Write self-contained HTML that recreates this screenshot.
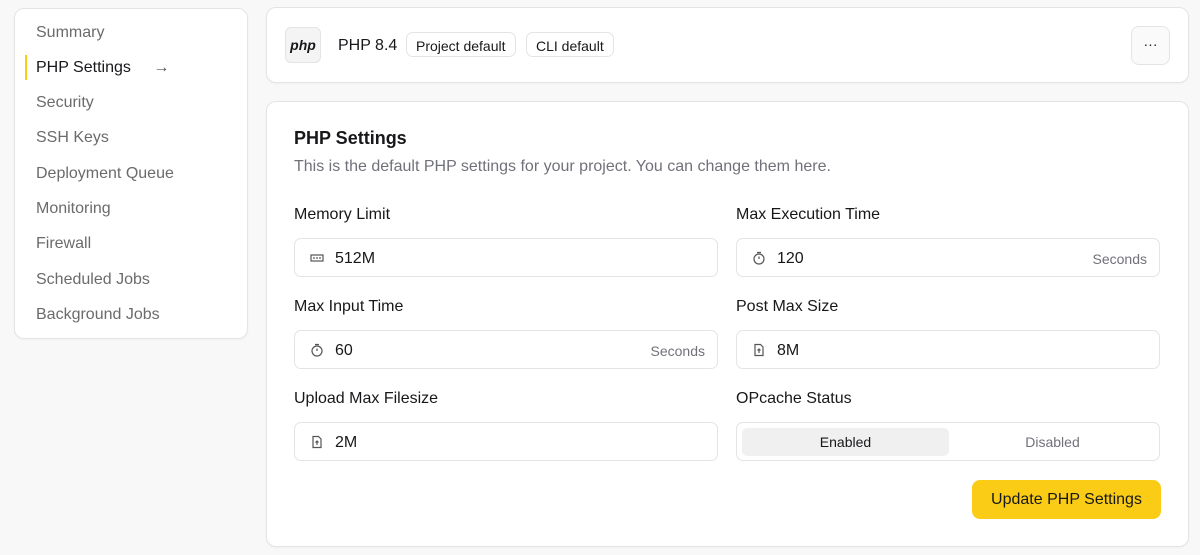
<!DOCTYPE html><html><head><style>
*{box-sizing:border-box;margin:0;padding:0}
body{width:1200px;height:555px;background:#f8f8f8;font-family:"Liberation Sans",sans-serif;position:relative;overflow:hidden;color:#18181b}
.card{position:absolute;background:#fff;border:1px solid #e4e4e7;border-radius:10px;box-shadow:0 1px 2px rgba(0,0,0,.04)}
.nav{position:absolute;left:36px;font-size:16px;color:#6b6b6b}
.lbl{position:absolute;font-size:16px;color:#18181b}
.inp{position:absolute;width:424px;height:39px;border:1px solid #e4e4e7;border-radius:7px;background:#fff}
.inp .v{position:absolute;left:40px;top:11px;font-size:16px}
.inp .s{position:absolute;right:12px;top:12px;font-size:14px;color:#71717a}
.inp svg{position:absolute;left:15px;top:12px}
.badge{position:absolute;top:32px;height:25px;border:1px solid #e4e4e7;border-radius:7px;font-size:14px;padding:5px 9px}
</style></head><body>
<div class="card" style="left:14px;top:8px;width:234px;height:331px"></div>
<div style="position:absolute;left:25px;top:55px;width:2px;height:25px;background:#facc15"></div>
<div class="nav" style="top:24px">Summary</div>
<div class="nav" style="top:59px;color:#18181b">PHP Settings <span style="margin-left:18px;color:#555">→</span></div>
<div class="nav" style="top:94px">Security</div>
<div class="nav" style="top:129px">SSH Keys</div>
<div class="nav" style="top:165px">Deployment Queue</div>
<div class="nav" style="top:200px">Monitoring</div>
<div class="nav" style="top:235px">Firewall</div>
<div class="nav" style="top:271px">Scheduled Jobs</div>
<div class="nav" style="top:306px">Background Jobs</div>

<div class="card" style="left:266px;top:7px;width:923px;height:76px"></div>
<div style="position:absolute;left:285px;top:27px;width:36px;height:36px;border:1px solid #e4e4e7;border-radius:6px;background:#f4f4f5;font-size:14px;font-weight:bold;font-style:italic;text-align:center;line-height:34px">php</div>
<div style="position:absolute;left:338px;top:37px;font-size:16px">PHP 8.4</div>
<div class="badge" style="left:406px">Project default</div>
<div class="badge" style="left:526px">CLI default</div>
<div style="position:absolute;left:1131px;top:26px;width:39px;height:39px;border:1px solid #e4e4e7;border-radius:8px;text-align:center;line-height:34px;font-size:14px;background:#fafafa">···</div>

<div class="card" style="left:266px;top:101px;width:923px;height:446px"></div>
<div style="position:absolute;left:294px;top:128px;font-size:18px;font-weight:bold">PHP Settings</div>
<div style="position:absolute;left:294px;top:158px;font-size:16px;color:#71717a">This is the default PHP settings for your project. You can change them here.</div>

<div class="lbl" style="left:294px;top:206px">Memory Limit</div>
<div class="lbl" style="left:736px;top:206px">Max Execution Time</div>
<div class="inp" style="left:294px;top:238px"><svg width="14" height="14" viewBox="0 0 14 14" fill="none" stroke="#555" stroke-width="1.2"><rect x="1" y="4" width="12" height="6"/><path d="M4 6v2M7 6v2M10 6v2"/></svg><span class="v">512M</span></div>
<div class="inp" style="left:736px;top:238px"><svg width="14" height="14" viewBox="0 0 14 14" fill="none" stroke="#555" stroke-width="1.2"><circle cx="7" cy="8" r="5"/><path d="M5 1.5h4M7 8V5.5"/></svg><span class="v">120</span><span class="s">Seconds</span></div>

<div class="lbl" style="left:294px;top:298px">Max Input Time</div>
<div class="lbl" style="left:736px;top:298px">Post Max Size</div>
<div class="inp" style="left:294px;top:330px"><svg width="14" height="14" viewBox="0 0 14 14" fill="none" stroke="#555" stroke-width="1.2"><circle cx="7" cy="8" r="5"/><path d="M5 1.5h4M7 8V5.5"/></svg><span class="v">60</span><span class="s">Seconds</span></div>
<div class="inp" style="left:736px;top:330px"><svg width="14" height="14" viewBox="0 0 14 14" fill="none" stroke="#555" stroke-width="1.2"><path d="M3 1.5h5.5l2.5 2.5v8.5H3z"/><path d="M7 10V6M5.5 7.5L7 6l1.5 1.5"/></svg><span class="v">8M</span></div>

<div class="lbl" style="left:294px;top:390px">Upload Max Filesize</div>
<div class="lbl" style="left:736px;top:390px">OPcache Status</div>
<div class="inp" style="left:294px;top:422px"><svg width="14" height="14" viewBox="0 0 14 14" fill="none" stroke="#555" stroke-width="1.2"><path d="M3 1.5h5.5l2.5 2.5v8.5H3z"/><path d="M7 10V6M5.5 7.5L7 6l1.5 1.5"/></svg><span class="v">2M</span></div>
<div class="inp" style="left:736px;top:422px"><div style="position:absolute;left:5px;top:5px;width:207px;height:28px;background:#f0f0f0;border-radius:5px;text-align:center;line-height:28px;font-size:14px">Enabled</div><div style="position:absolute;left:212px;top:5px;width:207px;height:28px;text-align:center;line-height:28px;font-size:14px;color:#71717a">Disabled</div></div>

<div style="position:absolute;left:972px;top:480px;width:189px;height:39px;background:#facc15;border-radius:8px;text-align:center;line-height:39px;font-size:16px">Update PHP Settings</div>
</body></html>
